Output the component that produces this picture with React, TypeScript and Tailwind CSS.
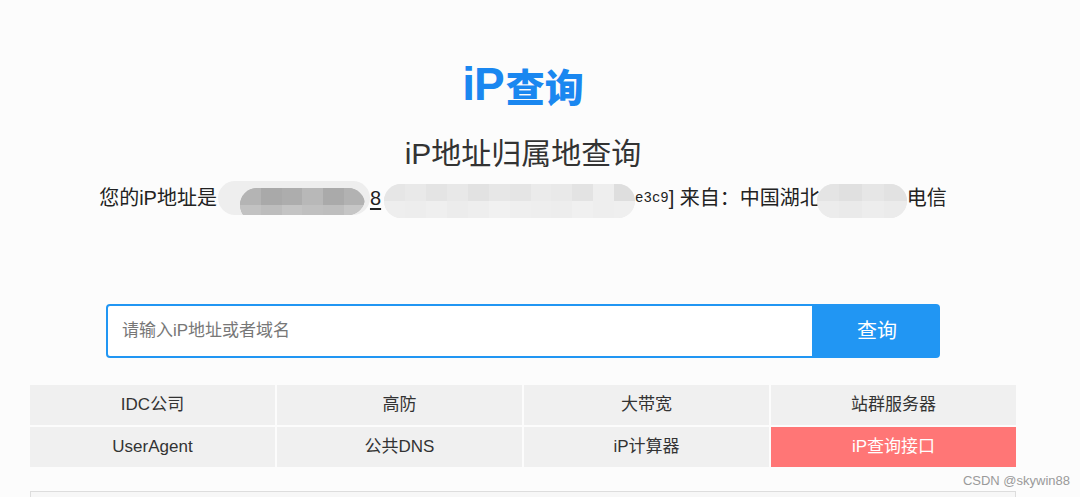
import React from 'react';

const cells = [
  { label: 'IDC公司' },
  { label: '高防' },
  { label: '大带宽' },
  { label: '站群服务器' },
  { label: 'UserAgent' },
  { label: '公共DNS' },
  { label: 'iP计算器' },
  { label: 'iP查询接口', active: true },
];

// mosaic tiles used to mimic the pixelated redaction in the screenshot
const darkTiles = ['#b4b4b4', '#a9a9a9', '#adadad', '#b8b8b8', '#aaaaaa', '#b2b2b2'];
const darkTiles2 = ['#c2c2c2', '#bdbdbd', '#c4c4c4', '#c0c0c0', '#bebebe', '#c6c6c6'];
const lightTiles = ['#e6e6e6', '#e9e9e9', '#e4e4e4', '#e8e8e8', '#e2e2e2', '#e7e7e7', '#e5e5e5', '#ebebeb', '#e9e9e9', '#e3e3e3', '#eeeeee', '#dedede'];
const lightTiles2 = ['#eeeeee', '#ededed', '#efefef', '#ececec', '#eeeeee', '#f1f1f1', '#efefef', '#eeeeee', '#ededed', '#f0f0f0', '#eeeeee', '#efefef'];

function Mosaic({ width, tiles, tiles2, bg }: { width: number; tiles: string[]; tiles2: string[]; bg: string }) {
  return (
    <span className="inline-flex flex-col rounded-full overflow-hidden h-[34px]" style={{ width, background: bg }}>
      <span className="flex h-[17px]">
        {tiles.map((c, i) => (
          <span key={i} className="flex-1" style={{ background: c }} />
        ))}
      </span>
      <span className="flex h-[17px]">
        {tiles2.map((c, i) => (
          <span key={i} className="flex-1" style={{ background: c }} />
        ))}
      </span>
    </span>
  );
}

export default function App() {
  return (
    <div
      className="relative w-[1080px] h-[497px] overflow-hidden bg-[#fcfcfc] text-[#333]"
      style={{ fontFamily: '"Liberation Sans", "Noto Sans CJK SC", sans-serif' }}
    >
      <div className="ml-[30px] w-[986px] flex flex-col items-center">
        {/* logo */}
        <div className="mt-[58px] h-[52px] flex items-center font-bold text-[#1a87f0] leading-none">
          <span className="text-[46px] tracking-[-1px]">iP</span>
          <span className="text-[39px] ml-[2px] mt-[3px]" style={{ fontFamily: '"Noto Sans CJK SC", sans-serif', fontWeight: 900 }}>查询</span>
        </div>

        {/* title */}
        <h1 className="mt-[26px] text-[30px] leading-[36px] font-normal text-[#333]">iP地址归属地查询</h1>

        {/* visitor ip */}
        <div className="mt-[5px] flex items-center text-[20px] leading-[34px] text-[#222]">
          <span>您的iP地址是</span>
          <span className="relative inline-flex items-center w-[152px] h-[34px] ml-px">
            <span className="absolute inset-0 rounded-full bg-[#eeeeee]" />
            <span className="absolute left-[22px] top-0 w-[125px] h-[34px] rounded-r-full overflow-hidden">
              <Mosaic width={125} tiles={darkTiles} tiles2={darkTiles2} bg="#b5b5b5" />
            </span>
          </span>
          <span className="underline underline-offset-[3px]">8</span>
          <span className="ml-[3px]">
            <Mosaic width={251} tiles={lightTiles} tiles2={lightTiles2} bg="#ebebeb" />
          </span>
          <span className="text-[14px]" style={{ fontFamily: '"Liberation Mono", monospace' }}>e3c9</span>
          <span>] 来自：中国湖北</span>
          <span className="-ml-[3px]">
            <Mosaic width={90} tiles={['#e4e4e4', '#e0e0e0', '#e6e6e6', '#e2e2e2']} tiles2={['#ececec', '#eaeaea', '#ededed', '#ebebeb']} bg="#e8e8e8" />
          </span>
          <span>电信</span>
        </div>

        {/* search */}
        <div className="mt-[86px] flex w-[834px] h-[54px]">
          <div className="flex-1 flex items-center border-2 border-[#2196f3] rounded-l-[4px] bg-white px-[14px]">
            <input
              className="w-full outline-none text-[17px] text-[#333] placeholder:text-[#777] bg-transparent"
              placeholder="请输入iP地址或者域名"
            />
          </div>
          <button className="w-[126px] bg-[#2196f3] text-white text-[20px] rounded-r-[4px]">查询</button>
        </div>

        {/* links */}
        <div className="mt-[27px] w-full grid grid-cols-4 gap-[2px] bg-transparent">
          {cells.map((c) => (
            <div
              key={c.label}
              className={`h-[40px] flex items-center justify-center text-[17px] ${
                c.active ? 'bg-[#ff7676] text-white' : 'bg-[#f0f0f0] text-[#333]'
              }`}
            >
              {c.label}
            </div>
          ))}
        </div>

        <div className="mt-[24px] w-full h-[40px] border border-[#dddddd] bg-[#f7f7f7]" />
      </div>

      <div className="absolute right-[10px] top-[471px] text-[13px] text-[#9a9a9a]">CSDN @skywin88</div>
    </div>
  );
}
